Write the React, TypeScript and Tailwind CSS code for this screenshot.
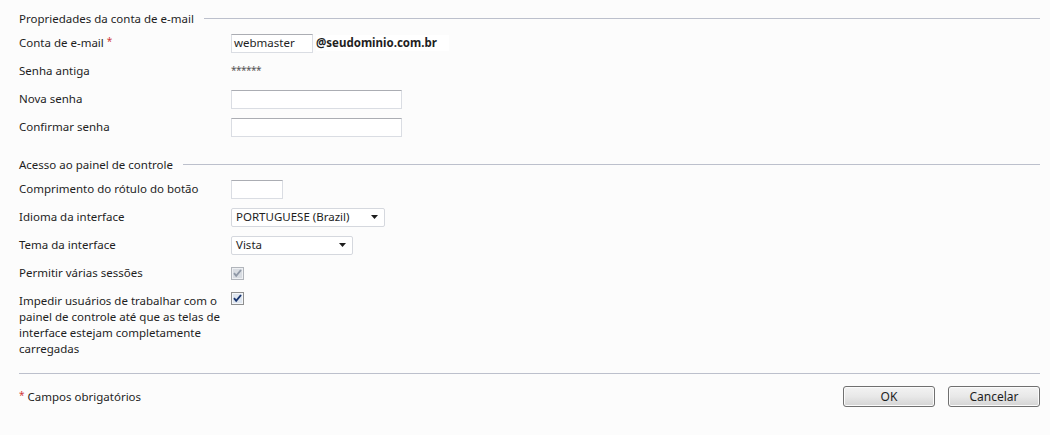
import React from "react";

const font = { fontFamily: '"Noto Sans", "Open Sans", Arial, sans-serif' };

function SectionTitle({ title }: { title: string }) {
  return (
    <div className="flex h-[21px] items-center">
      <span className="whitespace-nowrap">{title}</span>
      <div className="ml-[10px] h-px flex-1 bg-[#bcc0cc]" />
    </div>
  );
}

function Row({ label, children }: { label: React.ReactNode; children?: React.ReactNode }) {
  return (
    <div className="flex h-[28px] items-center">
      <div className="w-[212px] shrink-0">{label}</div>
      <div className="flex items-center">{children}</div>
    </div>
  );
}

function Star() {
  return <span className="relative -top-[2px] text-[10px] text-[#d03a3a]">*</span>;
}

function TextBox({ w, value }: { w: string; value?: string }) {
  return (
    <div
      className={`${w} flex h-[19px] items-center border border-[#dadde3] border-t-[#abadb3] bg-white px-[2px] leading-none`}
    >
      {value}
    </div>
  );
}

function Select({ w, value }: { w: string; value: string }) {
  return (
    <div
      className={`${w} flex h-[19px] items-center justify-between rounded-[2px] border border-[#d5d8de] bg-white pl-[4px] pr-[6px] leading-none`}
    >
      <span>{value}</span>
      <svg width="7" height="4" viewBox="0 0 7 4">
        <path d="M0 0 H7 L3.5 4 Z" fill="#1c1c1c" />
      </svg>
    </div>
  );
}

function Check({ disabled }: { disabled?: boolean }) {
  return (
    <svg width="13" height="13" viewBox="0 0 13 13">
      <rect x="0.5" y="0.5" width="12" height="12" fill={disabled ? "#eef0f3" : "#f4f6f9"} stroke={disabled ? "#b1b5bb" : "#8e8f8f"} />
      <rect x="2" y="2" width="9" height="9" fill={disabled ? "#d8dce2" : "#dfe6ef"} />
      <path
        d="M3 6.2 L5.2 8.8 L10 3"
        fill="none"
        stroke={disabled ? "#8f98a6" : "#1a3670"}
        strokeWidth="1.9"
      />
    </svg>
  );
}

function Button({ children }: { children: React.ReactNode }) {
  return (
    <button className="flex h-[21px] w-[92px] items-center justify-center rounded-[3px] border border-[#707070] bg-gradient-to-b from-[#f3f3f3] via-[#e8e8e8] to-[#d4d4d4] text-[12px] leading-none text-[#1e1e1e] shadow-[inset_0_0_0_1px_#fbfbfb]">
      {children}
    </button>
  );
}

export default function App() {
  return (
    <div
      style={font}
      className="h-[435px] w-[1050px] bg-[#fcfcfc] pl-[19px] pr-[10px] pt-[8px] text-[11.5px] leading-[16px] text-[#1e1e1e]"
    >
      <SectionTitle title="Propriedades da conta de e-mail" />
      <Row
        label={
          <span>
            Conta de e-mail <Star />
          </span>
        }
      >
        <TextBox w="w-[82px]" value="webmaster" />
        <span className="ml-[3px] bg-white pr-[12px] font-bold">@seudominio.com.br</span>
      </Row>
      <Row label="Senha antiga">
        <span className="-mt-[3px] text-[10px] tracking-[-0.5px] text-[#555]">******</span>
      </Row>
      <Row label="Nova senha">
        <TextBox w="w-[171px]" />
      </Row>
      <Row label="Confirmar senha">
        <TextBox w="w-[171px]" />
      </Row>

      <div className="mt-[13px]">
        <SectionTitle title="Acesso ao painel de controle" />
      </div>
      <Row label="Comprimento do rótulo do botão">
        <TextBox w="w-[52px]" />
      </Row>
      <Row label="Idioma da interface">
        <Select w="w-[154px]" value="PORTUGUESE (Brazil)" />
      </Row>
      <Row label="Tema da interface">
        <Select w="w-[122px]" value="Vista" />
      </Row>
      <Row label="Permitir várias sessões">
        <Check disabled />
      </Row>
      <div className="flex pt-[6px]">
        <div className="w-[212px] shrink-0">
          Impedir usuários de trabalhar com o
          <br />
          painel de controle até que as telas de
          <br />
          interface estejam completamente
          <br />
          carregadas
        </div>
        <div className="-mt-px">
          <Check />
        </div>
      </div>

      <div className="mt-[16px] h-px bg-[#bcc0cc]" />
      <div className="mt-[12px] flex items-center justify-between">
        <span>
          <Star /> Campos obrigatórios
        </span>
        <div className="flex gap-[13px]">
          <Button>OK</Button>
          <Button>Cancelar</Button>
        </div>
      </div>
    </div>
  );
}
